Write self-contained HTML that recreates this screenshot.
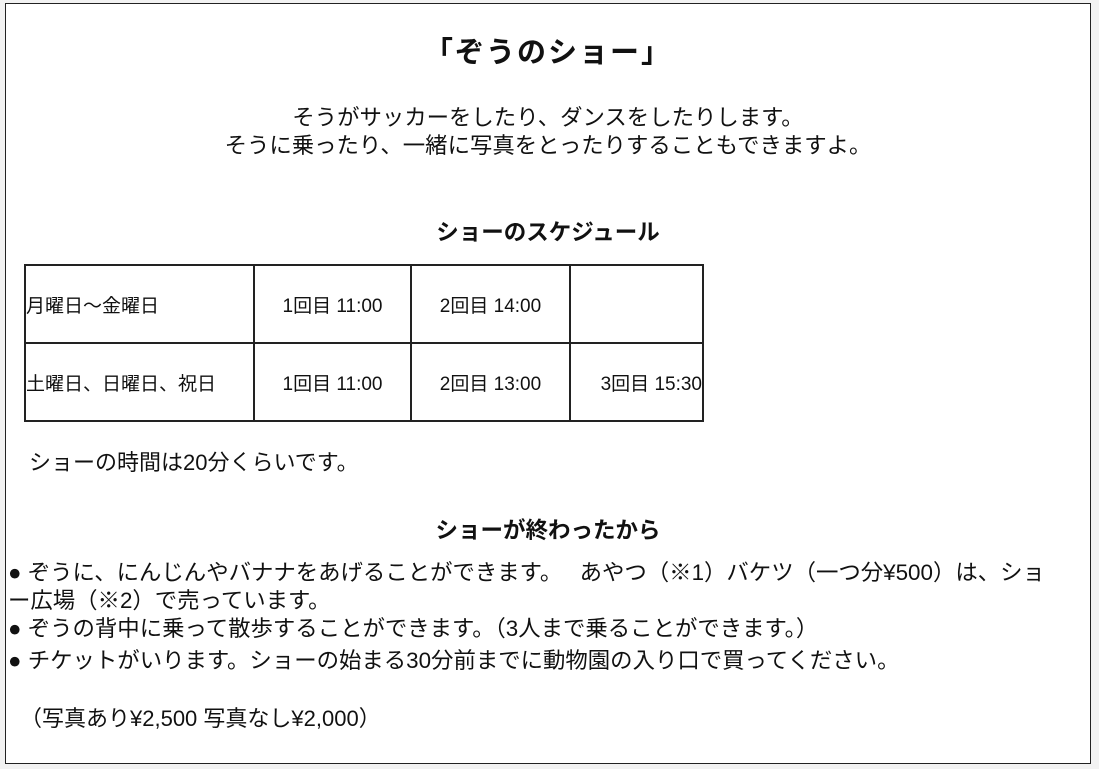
<!DOCTYPE html>
<html><head><meta charset="utf-8"><style>
html,body{margin:0;padding:0;background:#f2f2f2;width:1099px;height:769px;overflow:hidden}
body{font-family:"Liberation Sans","Noto Sans CJK JP",sans-serif;color:#111}
.box{position:absolute;left:5px;top:3px;width:1084px;height:759px;border:1.5px solid #222;background:#fff}
.t{position:absolute;white-space:nowrap;font-size:22.4px;line-height:28px}
.c{left:0;width:1084px;text-align:center}
.b{font-weight:bold}
table{position:absolute;left:18px;top:260px;border-collapse:collapse;font-size:19px}
td{border:2px solid #222;height:76px;padding:0;white-space:nowrap}
</style></head><body>
<div class="box">
<div class="t c b" style="top:31px;font-size:29px;letter-spacing:2px;line-height:36px">「ぞうのショー」</div>
<div class="t c" style="top:100px">そうがサッカーをしたり、ダンスをしたりします。</div>
<div class="t c" style="top:128px">そうに乗ったり、一緒に写真をとったりすることもできますよ。</div>
<div class="t c b" style="top:215px;font-size:22.5px">ショーのスケジュール</div>
<table>
<tr><td style="width:227px">月曜日～金曜日</td><td style="width:155px;text-align:center">1回目 11:00</td><td style="width:157px;text-align:center">2回目 14:00</td><td style="width:131px"></td></tr>
<tr><td>土曜日、日曜日、祝日</td><td style="text-align:center">1回目 11:00</td><td style="text-align:center">2回目 13:00</td><td style="text-align:right">3回目 15:30</td></tr>
</table>
<div class="t" style="left:23px;top:445px;font-size:22px">ショーの時間は20分くらいです。</div>
<div class="t c b" style="top:513px;font-size:22.5px">ショーが終わったから</div>
<div class="t" style="left:2px;top:555px">● ぞうに、にんじんやバナナをあげることができます。　 あやつ（※1）バケツ（一つ分¥500）は、ショ</div>
<div class="t" style="left:2px;top:583px">ー広場（※2）で売っています。</div>
<div class="t" style="left:2px;top:611px">● ぞうの背中に乗って散歩することができます。（3人まで乗ることができます。）</div>
<div class="t" style="left:2px;top:643px">● チケットがいります。ショーの始まる30分前までに動物園の入り口で買ってください。</div>
<div class="t" style="left:14px;top:701px;font-size:22px">（写真あり¥2,500 写真なし¥2,000）</div>
</div>
</body></html>
